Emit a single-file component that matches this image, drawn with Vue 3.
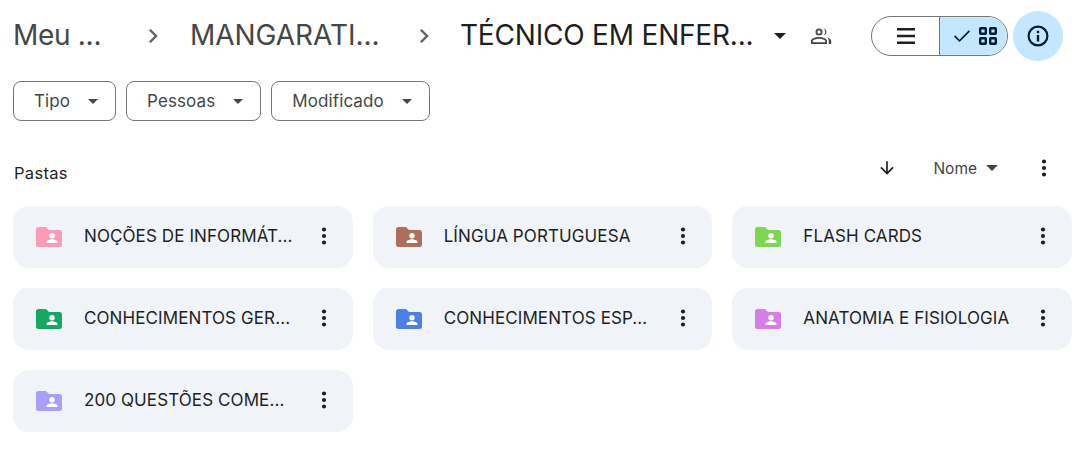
<template>
  <div class="page">
    <header class="topbar">
      <nav class="crumbs">
        <span class="crumb crumb-root">Meu ...</span>
        <svg class="chev chev-first" viewBox="0 0 24 24"><path d="M9 6.600 10.800 5l7 7-7 7L9 17.400 14.400 12z" /></svg>
        <span class="crumb crumb-mid">MANGARATI...</span>
        <svg class="chev chev-second" viewBox="0 0 24 24"><path d="M9 6.600 10.800 5l7 7-7 7L9 17.400 14.400 12z" /></svg>
        <span class="crumb crumb-current">TÉCNICO EM ENFER...</span>
        <span class="caret caret-dark"></span>
        <svg class="shared" viewBox="0 0 24 24">
          <path d="M10 4.500a3.500 3.500 0 1 1 0 7 3.500 3.500 0 0 1 0-7zm0 1.800a1.700 1.700 0 1 0 0 3.400 1.700 1.700 0 0 0 0-3.400zM10 13c3 0 8 1.400 8 3.800V20H2v-3.200C2 14.400 7 13 10 13zm0 1.800c-2.700 0-6.200 1.200-6.200 2.100v1.300h12.400v-1.300c0-.9-3.500-2.100-6.200-2.100z" />
          <path d="M14.800 4.600a3.500 3.500 0 0 1 0 6.800 5.300 5.300 0 0 0 0-6.800zM18 13.600c2.400.6 4.200 1.700 4.200 3.300V20h-2.400v-3.200c0-1.300-.7-2.400-1.800-3.200z" />
        </svg>
      </nav>
      <div class="view-toggle">
        <div class="toggle-side">
          <svg class="icon" viewBox="0 0 24 24"><path d="M3 18.700v-2.500h18v2.500zm0-6.700v-2.500h18V12zm0-6.700V2.800h18v2.500z" transform="translate(0 1.300)" /></svg>
        </div>
        <div class="toggle-side active">
          <svg class="icon-check" viewBox="0 0 24 24"><path d="M9 16.400 3.800 11.200 2.400 12.600 9 19.200 21.600 6.600 20.200 5.200z" /></svg>
          <svg class="icon-grid" viewBox="0 0 18 18">
            <rect x="1.200" y="1.200" width="5.600" height="5.600" rx="0.600" />
            <rect x="11.200" y="1.200" width="5.600" height="5.600" rx="0.600" />
            <rect x="1.200" y="11.200" width="5.600" height="5.600" rx="0.600" />
            <rect x="11.200" y="11.200" width="5.600" height="5.600" rx="0.600" />
          </svg>
        </div>
      </div>
      <button class="info-btn">
        <svg viewBox="0 0 24 24"><path d="M12 1.500a10.500 10.500 0 1 1 0 21 10.500 10.500 0 0 1 0-21zm0 2.200a8.300 8.300 0 1 0 0 16.600 8.300 8.300 0 0 0 0-16.600zM10.800 11h2.400v6.500h-2.400zm0-4.200h2.400v2.400h-2.400z" /></svg>
      </button>
    </header>

    <div class="filters">
      <button v-for="f in filters" :key="f" class="chip">
        <span>{{ f }}</span>
        <span class="caret caret-small"></span>
      </button>
    </div>

    <div class="section-head">
      <span class="section-title">Pastas</span>
      <div class="sort">
        <svg class="sort-arrow" viewBox="0 0 24 24"><path d="M11 4h2v12.200l5.600-5.600L20 12l-8 8-8-8 1.400-1.400 5.600 5.600z" /></svg>
        <span class="sort-name">Nome</span>
        <span class="caret caret-grey"></span>
        <svg class="kebab kebab-head" viewBox="0 0 24 24"><circle cx="12" cy="5.500" r="2.100" /><circle cx="12" cy="12" r="2.100" /><circle cx="12" cy="18.500" r="2.100" /></svg>
      </div>
    </div>

    <div class="folders">
      <div v-for="folder in folders" :key="folder.name" class="folder-card">
        <svg class="folder-icon" viewBox="0 0 26 20">
          <path :fill="folder.color" d="M2.500 0h7.500l3 3h10.500A2.500 2.500 0 0 1 26 5.500v12a2.500 2.500 0 0 1-2.500 2.500h-21A2.500 2.500 0 0 1 0 17.500v-15A2.500 2.500 0 0 1 2.500 0z" />
          <circle cx="16" cy="8.800" r="2.700" fill="#fff" />
          <path fill="#fff" d="M10.500 16v-1c0-1.800 3.600-2.700 5.500-2.700s5.500.9 5.500 2.700v1z" />
        </svg>
        <span class="folder-name">{{ folder.name }}</span>
        <svg class="kebab" viewBox="0 0 24 24"><circle cx="12" cy="5.500" r="2.100" /><circle cx="12" cy="12" r="2.100" /><circle cx="12" cy="18.500" r="2.100" /></svg>
      </div>
    </div>
  </div>
</template>

<script setup>
const filters = ['Tipo', 'Pessoas', 'Modificado']

const folders = [
  { name: 'NOÇÕES DE INFORMÁT...', color: '#f99bb9' },
  { name: 'LÍNGUA PORTUGUESA', color: '#ab6f5c' },
  { name: 'FLASH CARDS', color: '#7fd650' },
  { name: 'CONHECIMENTOS GER...', color: '#15a862' },
  { name: 'CONHECIMENTOS ESP...', color: '#4a80e8' },
  { name: 'ANATOMIA E FISIOLOGIA', color: '#d57ee8' },
  { name: '200 QUESTÕES COME...', color: '#a6a0fb' },
]
</script>

<style>
html, body {
  background: #fff;
  overflow: hidden;
}
</style>

<style scoped>
.page {
  width: 1079px;
  height: 450px;
  box-sizing: border-box;
  padding: 11px 7px 0 13px;
  font-family: "Inter", "Roboto", sans-serif;
  color: #1f1f1f;
}

.topbar {
  display: flex;
  align-items: center;
  height: 50px;
}

.crumbs {
  display: flex;
  align-items: center;
  flex: 1;
  color: #444746;
}

.crumb {
  white-space: nowrap;
  font-size: 28px;
  letter-spacing: -0.05px;
  line-height: 48px;
  padding-bottom: 2px;
}

.crumb-root {
  width: 88px;
  letter-spacing: -0.3px;
}

.crumb-mid {
  width: 190px;
}

.crumb-current {
  width: 293px;
  letter-spacing: -0.2px;
  color: #1f1f1f;
}

.chev {
  width: 24px;
  height: 24px;
  fill: #5f6368;
  flex: none;
}

.chev-first {
  margin: 0 26px 0 39px;
}

.chev-second {
  margin: 0 25px 0 31px;
}

.caret {
  display: inline-block;
  width: 0;
  height: 0;
  border-left: 6px solid transparent;
  border-right: 6px solid transparent;
  border-top: 6px solid #1f1f1f;
}

.caret-dark {
  margin-left: 21px;
}

.shared {
  width: 24px;
  height: 24px;
  fill: #444746;
  margin-left: 23px;
}

.view-toggle {
  display: flex;
  width: 137px;
  height: 40px;
  box-sizing: border-box;
  border: 1px solid #747775;
  border-radius: 20px;
  overflow: hidden;
  margin-right: 5px;
}

.toggle-side {
  width: 67px;
  display: flex;
  align-items: center;
  justify-content: center;
}

.toggle-side.active {
  flex: 1;
  background: #c2e7ff;
  border-left: 1px solid #747775;
  gap: 7px;
  padding-left: 1px;
  box-sizing: border-box;
}

.icon {
  width: 24px;
  height: 24px;
  fill: #1f1f1f;
}

.icon-check {
  width: 20px;
  height: 20px;
  fill: #001d35;
}

.icon-grid {
  width: 18px;
  height: 18px;
  fill: none;
  stroke: #001d35;
  stroke-width: 2.400;
}

.info-btn {
  width: 50px;
  height: 50px;
  border: none;
  padding: 0;
  border-radius: 50%;
  background: #c2e7ff;
  display: flex;
  align-items: center;
  justify-content: center;
  margin-right: 9px;
}

.info-btn svg {
  width: 24px;
  height: 24px;
  fill: #001d35;
}

.filters {
  display: flex;
  gap: 10px;
  margin-top: 20px;
}

.chip {
  display: flex;
  align-items: center;
  gap: 18px;
  height: 40px;
  box-sizing: border-box;
  padding: 0 17px 0 20px;
  background: #fff;
  border: 1px solid #747775;
  border-radius: 8px;
  font-family: "Inter", "Roboto", sans-serif;
  font-size: 17px;
  letter-spacing: 0.1px;
  color: #444746;
}

.caret-small {
  border-left-width: 5px;
  border-right-width: 5px;
  border-top: 5px solid #444746;
}

.section-head {
  display: flex;
  align-items: center;
  justify-content: space-between;
  height: 40px;
  margin-top: 27px;
}

.section-title {
  font-size: 16.500px;
  letter-spacing: 0.3px;
  padding: 10px 0 0 1px;
  color: #1f1f1f;
}

.sort {
  display: flex;
  align-items: center;
}

.sort-arrow {
  width: 20px;
  height: 20px;
  fill: #1f1f1f;
}

.sort-name {
  font-size: 15.500px;
  color: #444746;
  margin-left: 36px;
}

.caret-grey {
  margin-left: 9px;
  border-top-color: #444746;
}

.kebab {
  width: 24px;
  height: 24px;
  fill: #1f1f1f;
  flex: none;
}

.kebab-head {
  margin-left: 34px;
  margin-right: 16px;
}

.folders {
  display: grid;
  grid-template-columns: repeat(3, 1fr);
  gap: 20px;
  margin-top: 18px;
}

.folder-card {
  display: flex;
  align-items: center;
  height: 62px;
  padding: 0 17px 2px 23px;
  background: #f0f4f9;
  border-radius: 16px;
  box-sizing: border-box;
}

.folder-icon {
  width: 26px;
  height: 20px;
  flex: none;
  margin-top: 2px;
}

.folder-name {
  margin-left: 22px;
  font-size: 17px;
  letter-spacing: 0.1px;
  color: #1f1f1f;
  white-space: nowrap;
}

.folder-card .kebab {
  margin-left: auto;
}
</style>
